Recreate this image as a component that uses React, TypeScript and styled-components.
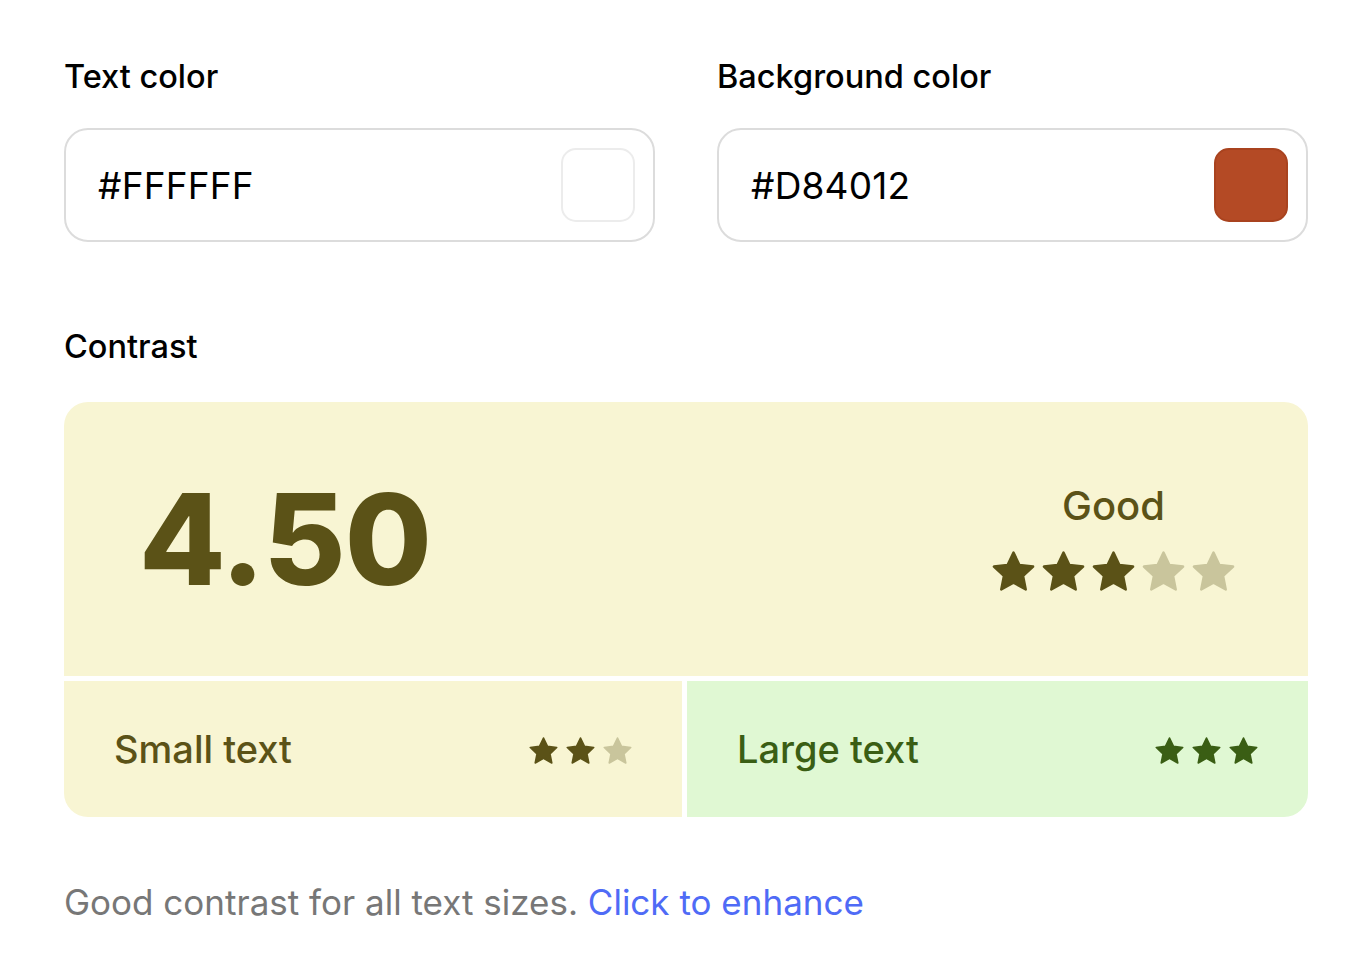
import React from "react";
import styled, { createGlobalStyle } from "styled-components";

const GlobalStyle = createGlobalStyle`
  * { box-sizing: border-box; }
  html, body { margin: 0; padding: 0; background: #ffffff; }
  body { font-family: Inter, "Noto Sans", sans-serif; color: #000; }
`;

const Page = styled.div`
  width: 1244px;
  margin-left: 64px;
  padding-top: 58px;
  display: flex;
  flex-direction: column;
`;

const FieldRow = styled.div`
  display: grid;
  grid-template-columns: 1fr 1fr;
  column-gap: 62px;
`;

const Field = styled.div`
  display: flex;
  flex-direction: column;
`;

const Label = styled.div`
  font-size: 32.5px;
  font-weight: 500;
  line-height: 38px;
  color: #000;
`;

const InputBox = styled.div`
  margin-top: 32px;
  height: 114px;
  border: 2px solid #dcdcdc;
  border-radius: 24px;
  display: flex;
  align-items: center;
  justify-content: space-between;
  padding: 0 18px 0 32px;
`;

const HexText = styled.span`
  font-size: 37px;
  font-weight: 400;
  color: #000;
  letter-spacing: 0.2px;
`;

const Swatch = styled.div<{ $color: string; $border: string }>`
  width: 74px;
  height: 74px;
  border-radius: 15px;
  background: ${(p) => p.$color};
  border: 2px solid ${(p) => p.$border};
`;

const ContrastLabel = styled(Label)`
  margin-top: 86px;
`;

const Card = styled.div`
  margin-top: 36px;
  display: flex;
  flex-direction: column;
  gap: 5px;
`;

const ScoreBox = styled.div`
  height: 274px;
  background: #f8f5d3;
  border-radius: 24px 24px 0 0;
  display: flex;
  align-items: center;
  justify-content: space-between;
  padding: 0 70px 0 75px;
`;

const Score = styled.div`
  font-size: 126px;
  font-weight: 800;
  color: #5b5217;
  line-height: 1;
  letter-spacing: -1px;
`;

const Rating = styled.div`
  display: flex;
  flex-direction: column;
  align-items: center;
  gap: 19px;
  margin-top: 2px;
`;

const RatingText = styled.div`
  font-size: 40px;
  font-weight: 500;
  color: #5b5217;
  line-height: 46px;
`;

const Stars = styled.div<{ $gap: number; $shift?: number }>`
  display: flex;
  gap: ${(p) => p.$gap}px;
  margin-top: ${(p) => p.$shift ?? 0}px;
`;

const BottomRow = styled.div`
  display: grid;
  grid-template-columns: 618px 1fr;
  gap: 5px;
`;

const SizeCell = styled.div<{ $bg: string; $radius: string }>`
  height: 136px;
  background: ${(p) => p.$bg};
  border-radius: ${(p) => p.$radius};
  display: flex;
  align-items: center;
  justify-content: space-between;
  padding: 0 48px 0 50px;
`;

const SizeText = styled.span<{ $color: string }>`
  font-size: 38px;
  font-weight: 500;
  color: ${(p) => p.$color};
`;

const Footer = styled.p`
  margin: 64px 0 0;
  font-size: 35px;
  font-weight: 400;
  color: #777777;
  line-height: 42px;
`;

const Link = styled.a`
  color: #4f6bf6;
  text-decoration: none;
  cursor: pointer;
`;

const Star: React.FC<{ size: number; color: string }> = ({ size, color }) => (
  <svg width={size} height={size} viewBox="0 0 24 24">
    <path
      d="M12 2.2 L14.9 8.3 L21.6 9.1 L16.7 13.7 L18 20.3 L12 17 L6 20.3 L7.3 13.7 L2.4 9.1 L9.1 8.3 Z"
      fill={color}
      stroke={color}
      strokeWidth={1.2}
      strokeLinejoin="round"
    />
  </svg>
);

const renderStars = (filled: number, total: number, size: number, on: string, off: string) =>
  Array.from({ length: total }, (_, i) => (
    <Star key={i} size={size} color={i < filled ? on : off} />
  ));

export default function App() {
  return (
    <>
      <GlobalStyle />
      <Page>
        <FieldRow>
          <Field>
            <Label>Text color</Label>
            <InputBox>
              <HexText>#FFFFFF</HexText>
              <Swatch $color="#ffffff" $border="#ececec" />
            </InputBox>
          </Field>
          <Field>
            <Label>Background color</Label>
            <InputBox>
              <HexText>#D84012</HexText>
              <Swatch $color="#b44a25" $border="#a9431f" />
            </InputBox>
          </Field>
        </FieldRow>

        <ContrastLabel>Contrast</ContrastLabel>

        <Card>
          <ScoreBox>
            <Score>4.50</Score>
            <Rating>
              <RatingText>Good</RatingText>
              <Stars $gap={1}>{renderStars(3, 5, 49, "#5b5217", "#c9c59c")}</Stars>
            </Rating>
          </ScoreBox>
          <BottomRow>
            <SizeCell $bg="#f8f5d3" $radius="0 0 0 24px">
              <SizeText $color="#5b5217">Small text</SizeText>
              <Stars $gap={4} $shift={4}>{renderStars(2, 3, 33, "#5b5217", "#c9c59c")}</Stars>
            </SizeCell>
            <SizeCell $bg="#e0f8d3" $radius="0 0 24px 0">
              <SizeText $color="#3a5e14">Large text</SizeText>
              <Stars $gap={4} $shift={4}>{renderStars(3, 3, 33, "#3a5e14", "#3a5e14")}</Stars>
            </SizeCell>
          </BottomRow>
        </Card>

        <Footer>
          Good contrast for all text sizes. <Link>Click to enhance</Link>
        </Footer>
      </Page>
    </>
  );
}
